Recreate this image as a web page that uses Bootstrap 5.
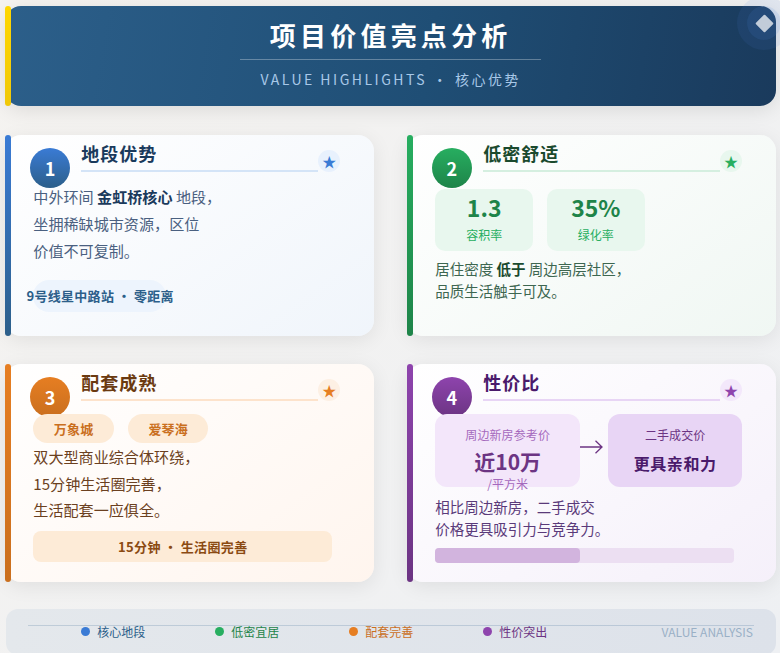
<!DOCTYPE html>
<html lang="zh-CN"><head><meta charset="utf-8"><title>项目价值亮点分析</title>
<link href="https://cdn.jsdelivr.net/npm/bootstrap@5.3.0/dist/css/bootstrap.min.css" rel="stylesheet">
<style>
html,body{height:653px;overflow:hidden}
body{font-family:"Noto Sans CJK SC","Noto Sans",sans-serif;background:linear-gradient(135deg,#f5f3f0,#eef0f3);padding:5.7px 4px 0 5.3px}
.bar{position:absolute;left:0;top:0;bottom:0;width:6px;border-radius:3px}
.hero{height:100.3px;border-radius:16px;background:linear-gradient(100deg,#2c5f8a,#1f4e75 55%,#1a3a5c);box-shadow:0 4px 20px rgba(0,0,0,.1);color:#fff}
.hero .bar{background:linear-gradient(180deg,#ffd700,#f0c808)}
.hero-title{font-size:26px;font-weight:700;letter-spacing:4.2px;line-height:37px;padding:10px 29.5px 6px;border-bottom:1px solid rgba(255,255,255,.3)}
.hero-sub{font-size:14px;letter-spacing:2.5px;color:#a8c8e8;line-height:20px;margin-top:9px}
.ring{position:absolute;width:34px;height:34px;right:-5px;top:0;border-radius:50%;background:rgba(74,127,212,.22);box-shadow:0 0 0 10px rgba(74,127,212,.1)}
.diamond{position:absolute;width:13px;height:13px;right:5px;top:11px;background:rgba(255,255,255,.72);transform:rotate(45deg);border-radius:1px}
.cards{gap:33px;margin-top:29px}
.cards.second{margin-top:28px}
.vcard{flex:1 1 0;min-width:0;height:201px;border-radius:16px;box-shadow:0 4px 20px rgba(0,0,0,.08)}
.second .vcard{height:217.7px}
.head{padding:0 34px 0 24.7px;height:37px}
.num{width:40px;height:40px;flex:none;margin:13.3px 11.3px 0 0;color:#fff;font-size:18px;font-weight:700;box-shadow:0 0 0 1px rgba(255,255,255,.5)}
.ttl{font-size:18px;font-weight:700;letter-spacing:1px;line-height:26px;padding-top:5px;height:37px;border-bottom:2px solid}
.star{width:22px;height:22px;flex:none;font-size:14px;line-height:1;align-self:flex-end}
.body{padding:13px 0 0 28px}
.txt{font-size:15.1px;margin:0}
.txt1{line-height:27px;margin-top:-1.5px}.txt3{line-height:26.1px;margin-top:-1.5px}
.sm{font-size:14.5px;line-height:22.2px;margin:0}
.pill{width:132.7px;height:31.4px;margin-top:16px;padding-left:1px;font-size:13px;font-weight:700;white-space:nowrap;letter-spacing:.3px}
.c1{background:linear-gradient(145deg,#fff,#f0f5fb)}
.c1 .bar{background:linear-gradient(180deg,#3a7bd5,#2c5f8a)}
.c1 .num{background:linear-gradient(180deg,#3a7bd5,#2c5f8a)}
.c1 .ttl{color:#1a3a5c;border-color:#d4e4f7}.c1 .star{background:#e8f1fd;color:#3a7bd5}
.c1 .txt{color:#4a6080}.c1 strong{color:#1a3a5c}
.c1 .pill{background:#edf4fd;color:#2c5f8a}
.c2{background:linear-gradient(145deg,#fff,#f0f7f3)}
.c2 .bar{background:linear-gradient(180deg,#27ae60,#1e8449)}
.c2 .num{background:linear-gradient(180deg,#27ae60,#1e8449)}
.c2 .ttl{color:#1a4a2e;border-color:#d5efe0}.c2 .star{background:#e8f7ee;color:#27ae60}
.c2 .sm{color:#3d6650;margin-top:-2px}.c2 strong{color:#1a4a2e}
.stats{gap:13.7px;margin-top:4px;margin-bottom:8.6px}
.stat{width:98px;height:62px;border-radius:10px;background:#e8f7ee}
.stat b{display:block;font-size:23px;line-height:30px;padding-top:3px;color:#1e8449}
.stat span{display:block;font-size:12px;line-height:18px;margin-top:4px;color:#27ae60}
.c3{background:linear-gradient(145deg,#fff,#fff5ee)}
.c3 .bar{background:linear-gradient(180deg,#e67e22,#ca6f1e)}
.c3 .num{background:linear-gradient(180deg,#e67e22,#ca6f1e)}
.c3 .ttl{color:#6b3a10;border-color:#fde3cc}.c3 .star{background:#fdf0e4;color:#e67e22}
.c3 .txt{color:#6b4020}
.chips{gap:14px;margin-bottom:2px;position:relative}
.chip{width:80.6px;height:29px;background:#fdebd7;color:#ca6f1e;font-size:13px;font-weight:700;letter-spacing:.2px}
.band{width:299px;height:31px;margin-top:9.5px;border-radius:8px;background:#fdebd7;color:#8b4a12;font-size:13px;font-weight:700;letter-spacing:.35px}
.c4{background:linear-gradient(145deg,#fff,#f5f0fa)}
.c4 .bar{background:linear-gradient(180deg,#8e44ad,#6c3483)}
.c4 .num{background:linear-gradient(180deg,#8e44ad,#6c3483)}
.c4 .ttl{color:#4a1a6b;border-color:#e8d5f5}.c4 .star{background:#f3e8fb;color:#8e44ad}
.c4 .sm{color:#5a3a7a;margin-top:-.5px}
.cmp{position:relative;margin-bottom:9px}
.box{height:73.4px;border-radius:12px;text-align:center;padding-top:12px}
.box1{width:145px;background:#f3e6fa}
.box2{width:133.4px;background:#e8d5f5;margin-left:28.3px}
.box small{display:block;font-size:12px;letter-spacing:.1px;line-height:18px}
.box1 small{color:#a569bd}.box2 small{color:#6c3483}
.box1 b{display:block;font-size:21px;line-height:26px;margin-top:4px;color:#6c3483}
.box1 i{display:block;font-style:normal;font-size:12px;line-height:16px;margin-top:2px;color:#a569bd}
.box2 b{display:block;font-size:16px;letter-spacing:.6px;line-height:24px;margin-top:7px;color:#4a1a6b}
.arrow{position:absolute;left:145px;top:26px;width:23px;height:14px}
.track{width:299px;height:14.4px;margin-top:8px;background:#ecdff2;border-radius:4px}
.fill{height:100%;background:#d2b4de;border-radius:4px}
.foot{height:46px;margin:27.3px 0 0 .7px;border-radius:12px;background:linear-gradient(90deg,#e4e8ec,#dde2ea);padding:13px 22px 0 75.3px;font-size:12px;line-height:20px}
.foot-line{position:absolute;left:22.3px;right:22px;top:16.5px;height:1px;background:rgba(44,95,138,.2)}
.dot{width:9px;height:9px;border-radius:50%;margin-right:7px;flex:none;background:currentColor}
.item{width:134px;height:20px}
.va{color:#9ab0c6;margin-left:auto;padding-right:1px;letter-spacing:.02px}
.t1{color:#2c5f8a}.t2{color:#1e8449}.t3{color:#ca6f1e}.t4{color:#6c3483}
.d1{color:#3a7bd5}.d2{color:#27ae60}.d3{color:#e67e22}.d4{color:#8e44ad}
</style></head><body>
<header class="hero position-relative text-center">
  <span class="bar"></span>
  <span class="ring"></span><span class="diamond"></span>
  <div class="hero-title d-inline-block">项目价值亮点分析</div>
  <div class="hero-sub">VALUE HIGHLIGHTS ・ 核心优势</div>
</header>
<div class="cards d-flex">
  <section class="vcard c1 position-relative">
    <span class="bar"></span>
    <div class="head d-flex">
      <div class="num rounded-circle d-flex align-items-center justify-content-center">1</div>
      <div class="ttl flex-grow-1">地段优势</div>
      <div class="star rounded-circle d-flex align-items-center justify-content-center">★</div>
    </div>
    <div class="body">
      <p class="txt txt1">中外环间 <strong>金虹桥核心</strong> 地段，<br>坐拥稀缺城市资源，区位<br>价值不可复制。</p>
      <div class="pill rounded-pill d-flex justify-content-center align-items-center">9号线星中路站 ・ 零距离</div>
    </div>
  </section>
  <section class="vcard c2 position-relative">
    <span class="bar"></span>
    <div class="head d-flex">
      <div class="num rounded-circle d-flex align-items-center justify-content-center">2</div>
      <div class="ttl flex-grow-1">低密舒适</div>
      <div class="star rounded-circle d-flex align-items-center justify-content-center">★</div>
    </div>
    <div class="body">
      <div class="stats d-flex text-center">
        <div class="stat"><b>1.3</b><span>容积率</span></div>
        <div class="stat"><b>35%</b><span>绿化率</span></div>
      </div>
      <p class="sm">居住密度 <strong>低于</strong> 周边高层社区，<br>品质生活触手可及。</p>
    </div>
  </section>
</div>
<div class="cards second d-flex">
  <section class="vcard c3 position-relative">
    <span class="bar"></span>
    <div class="head d-flex">
      <div class="num rounded-circle d-flex align-items-center justify-content-center">3</div>
      <div class="ttl flex-grow-1">配套成熟</div>
      <div class="star rounded-circle d-flex align-items-center justify-content-center">★</div>
    </div>
    <div class="body">
      <div class="chips d-flex">
        <div class="chip rounded-pill d-flex align-items-center justify-content-center">万象城</div>
        <div class="chip rounded-pill d-flex align-items-center justify-content-center">爱琴海</div>
      </div>
      <p class="txt txt3">双大型商业综合体环绕，<br>15分钟生活圈完善，<br>生活配套一应俱全。</p>
      <div class="band d-flex align-items-center justify-content-center">15分钟 ・ 生活圈完善</div>
    </div>
  </section>
  <section class="vcard c4 position-relative">
    <span class="bar"></span>
    <div class="head d-flex">
      <div class="num rounded-circle d-flex align-items-center justify-content-center">4</div>
      <div class="ttl flex-grow-1">性价比</div>
      <div class="star rounded-circle d-flex align-items-center justify-content-center">★</div>
    </div>
    <div class="body">
      <div class="cmp d-flex">
        <div class="box box1"><small>周边新房参考价</small><b>近10万</b><i>/平方米</i></div>
        <svg class="arrow" viewBox="0 0 23 14" fill="none" stroke="#6c3483" stroke-width="1.3"><path d="M0 7H22M15.5 .8 22 7 15.5 13.2"/></svg>
        <div class="box box2"><small>二手成交价</small><b>更具亲和力</b></div>
      </div>
      <p class="sm">相比周边新房，二手成交<br>价格更具吸引力与竞争力。</p>
      <div class="track"><div class="fill" style="width:48.5%"></div></div>
    </div>
  </section>
</div>
<footer class="foot position-relative d-flex">
  <span class="foot-line"></span>
  <div class="item d-flex align-items-center t1"><span class="dot d1"></span><span>核心地段</span></div>
  <div class="item d-flex align-items-center t2"><span class="dot d2"></span><span>低密宜居</span></div>
  <div class="item d-flex align-items-center t3"><span class="dot d3"></span><span>配套完善</span></div>
  <div class="item d-flex align-items-center t4"><span class="dot d4"></span><span>性价突出</span></div>
  <div class="va">VALUE ANALYSIS</div>
</footer>
<script src="https://cdn.jsdelivr.net/npm/bootstrap@5.3.0/dist/js/bootstrap.bundle.min.js"></script>
</body></html>
